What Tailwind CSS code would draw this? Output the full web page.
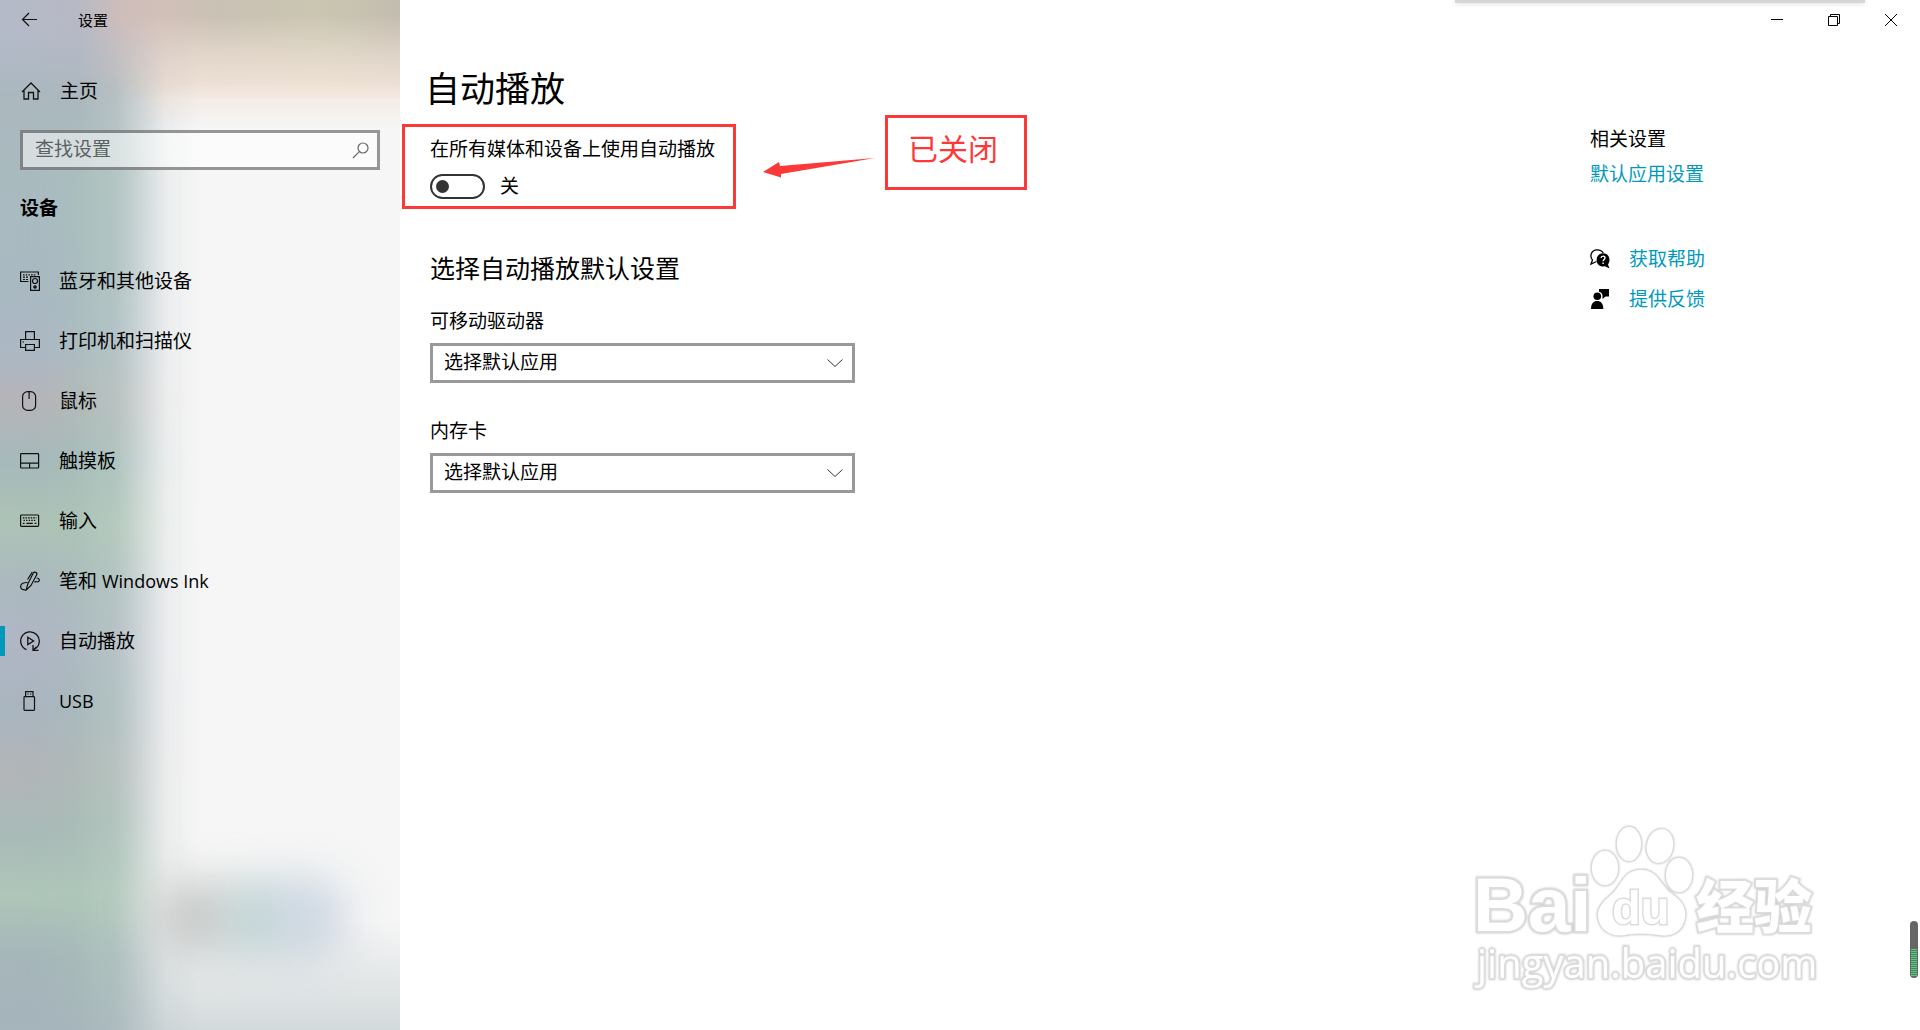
<!DOCTYPE html>
<html lang="zh-CN">
<head>
    <meta charset="UTF-8">
    <meta name="viewport" content="width=device-width, initial-scale=1.0">
    <title>设置 - 自动播放</title>
    <script src="https://cdn.jsdelivr.net/npm/@tailwindcss/browser@4"></script>
</head>
<body class="bg-white text-black text-[19px] leading-[30px] font-['Open_Sans','Noto_Sans_CJK_SC',sans-serif]">
    <div class="relative flex min-h-screen overflow-hidden">

        <!-- Sidebar -->
        <aside class="relative isolate w-[400px] shrink-0 bg-[#f6f6f6] overflow-hidden">
            <!-- Acrylic backdrop -->
            <div class="absolute inset-0 -z-10">
                <div class="absolute inset-x-0 top-0 h-[130px] bg-[#f4e6db] [mask-image:linear-gradient(180deg,#000_0%,#000_65%,transparent_98%)]"></div>
                <div class="absolute inset-y-0 left-0 w-[200px] bg-[linear-gradient(180deg,#b3b9c8_0px,#b0b9c6_40px,#abb8be_90px,#a9bbc0_200px,#a9b9c2_290px,#acb8c4_350px,#b5b5b9_400px,#a6b9bb_460px,#aec3b6_525px,#abbabf_580px,#b0b6c5_640px,#a9b5bf_710px,#b2b5b8_770px,#a9bab8_830px,#afc6b9_895px,#a5b6b9_960px,#a3b1bb_1030px)] [mask-image:linear-gradient(90deg,#000_0px,#000_80px,rgba(0,0,0,.85)_115px,rgba(0,0,0,.5)_140px,rgba(0,0,0,.15)_165px,transparent_200px)]"></div>
                <div class="absolute left-[75px] top-[130px] h-[900px] w-[50px] bg-[#aec7ba]/50 blur-xl"></div>
                <div class="absolute inset-x-0 top-0 h-[110px] bg-[linear-gradient(90deg,#b4bac8_0px,#b7b9c4_80px,#cdbdb9_120px,#d2c0b9_160px,#c9c1b4_220px,#cbc6b2_320px,#c3bdaf_400px)] [mask-image:linear-gradient(180deg,#000_0%,#000_15%,rgba(0,0,0,.45)_50%,transparent_90%)]"></div>
                <div class="absolute left-[150px] top-[885px] h-[65px] w-[95px] rounded-full bg-[#c4c6c5] blur-xl"></div>
                <div class="absolute left-[225px] top-[885px] h-[65px] w-[75px] rounded-full bg-[#b8d0d1] blur-xl"></div>
                <div class="absolute left-[275px] top-[880px] h-[75px] w-[70px] rounded-full bg-[#c9d3e1] blur-xl"></div>
                <div class="absolute inset-x-0 bottom-0 h-[110px] bg-linear-to-t from-[#a9b8bc]/45 to-transparent"></div>
            </div>

            <div class="flex h-10 items-center pl-5 text-[15px]">
                <button type="button" aria-label="返回" class="flex w-[58px] items-center">
                    <svg class="h-5 w-5" viewBox="0 0 20 20" fill="none" stroke="#111" stroke-width="1.2"><path d="M17 9.5H2.5M9 3L2.5 9.5L9 16"/></svg>
                </button>
                <span>设置</span>
            </div>

            <a href="#" class="mt-9 flex h-[30px] items-center gap-[19px] pl-[21px]">
                <svg class="h-5 w-5" viewBox="0 0 20 20" fill="none" stroke="#111" stroke-width="1.3"><path d="M1 11L10 2L19 11M3 9.5V18H7.5V11.5H12.5V18H17V9.5"/></svg>
                <span>主页</span>
            </a>

            <div class="relative mx-5 mt-6 h-10">
                <input type="text" aria-label="查找设置" placeholder="查找设置" class="h-full w-full border-3 border-black/40 bg-white/50 px-3 pb-0.5 outline-none placeholder:text-[#5c6062]">
                <svg class="absolute right-2.5 top-2.5 h-5 w-5" viewBox="0 0 20 20" fill="none" stroke="#666" stroke-width="1.2"><circle cx="13" cy="8" r="5"/><path d="M9.3 11.7L3 18"/></svg>
            </div>

            <h2 class="mt-[23px] pl-5 font-bold">设备</h2>

            <nav class="mt-7">
                <a href="#" class="flex h-15 items-center gap-[19px] pl-5">
                    <svg class="h-5 w-5" viewBox="0 0 20 20" fill="none" stroke="#111" stroke-width="1.2"><path d="M8.5 10.5H.6V1H18.4V4"/><path d="M3 3.8H16" stroke-dasharray="1.5 1.2"/><path d="M3 6.2H8.5M3 8.5H8.5" stroke-dasharray="2 1"/><path d="M10.6 5.6H19.4V19.4H10.6Z"/><circle cx="15" cy="10" r="2.5"/><circle cx="15" cy="16" r="1.2" fill="#111"/></svg>
                    <span>蓝牙和其他设备</span>
                </a>
                <a href="#" class="flex h-15 items-center gap-[19px] pl-5">
                    <svg class="h-5 w-5" viewBox="0 0 20 20" fill="none" stroke="#111" stroke-width="1.2"><path d="M5.6 8.5V.6H14.4V8.5M5.5 16.5H.6V8.5H19.4V16.5H14.5M5.6 13.5H14.4V19.4H5.6Z"/><path d="M2.5 11H4"/></svg>
                    <span>打印机和扫描仪</span>
                </a>
                <a href="#" class="flex h-15 items-center gap-[19px] pl-5">
                    <svg class="h-5 w-5" viewBox="0 0 20 20" fill="none" stroke="#111" stroke-width="1.2"><rect x="2.6" y=".6" width="13" height="18.8" rx="5"/><path d="M9.1 1V8"/></svg>
                    <span>鼠标</span>
                </a>
                <a href="#" class="flex h-15 items-center gap-[19px] pl-5">
                    <svg class="h-5 w-5" viewBox="0 0 20 20" fill="none" stroke="#111" stroke-width="1.2"><rect x=".6" y="2.6" width="18" height="14.4" rx=".8"/><path d="M.6 12.2H18.6M9.6 12.2V17"/></svg>
                    <span>触摸板</span>
                </a>
                <a href="#" class="flex h-15 items-center gap-[19px] pl-5">
                    <svg class="h-5 w-5" viewBox="0 0 20 20" fill="none" stroke="#111" stroke-width="1.2"><rect x=".6" y="4" width="18" height="11.4" rx=".8"/><path d="M2.8 6.8H16.5" stroke-dasharray="1.6 1"/><path d="M3.5 9.4H16" stroke-dasharray="1.4 1.2"/><path d="M2.8 12.4H4.6M6.4 12.4H12.8M14.6 12.4H16.4"/></svg>
                    <span>输入</span>
                </a>
                <a href="#" class="flex h-15 items-center gap-[19px] pl-5">
                    <svg class="h-5 w-5" viewBox="0 0 20 20" fill="none" stroke="#111" stroke-width="1.2"><path d="M6 19.3L8 12.5L13.2 2.2C14.2.2 17.6 1.4 16.8 3.6L11 14.5L6 19.3Z"/><path d="M12.3 1.2L7.5 8.5"/><path d="M7.5 11.5C3 11.4.6 13 .6 15.5C.6 18.2 3 19.2 5.5 18.8M16.5 7C19.5 7.2 20 9.5 18.5 10.5C17.2 11.4 15.8 10 14.4 11.2"/></svg>
                    <span>笔和 <span class="text-lg">Windows Ink</span></span>
                </a>
                <a href="#" aria-current="page" class="relative flex h-15 items-center gap-[19px] pl-5 before:absolute before:left-0 before:h-[30px] before:w-[5px] before:bg-[#0099bc]">
                    <svg class="h-5 w-5" viewBox="0 0 20 20" fill="none" stroke="#111" stroke-width="1.3"><path d="M6.5 18.7A9.3 9.3 0 1 1 15.2 17.8"/><path d="M13 14V19.3H18.5M13 19.3L16.5 16"/><path d="M7.8 6.3L13.6 10L7.8 13.6Z"/></svg>
                    <span>自动播放</span>
                </a>
                <a href="#" class="flex h-15 items-center gap-[19px] pl-5">
                    <svg class="h-5 w-5" viewBox="0 0 20 20" fill="none" stroke="#111" stroke-width="1.2"><path d="M5.6 5.5V.6H13V5.5"/><rect x="4" y="5.6" width="10.5" height="13.8" rx=".8"/><path d="M7.3 3H8.6M10 3H11.3"/></svg>
                    <span class="text-lg">USB</span>
                </a>
            </nav>
        </aside>

        <!-- Content -->
        <div class="min-w-0 flex-1">
            <div class="flex h-10 items-center justify-end pr-px">
                <button type="button" aria-label="最小化" class="flex h-10 w-[57px] items-center justify-center">
                    <svg class="h-3 w-3" viewBox="0 0 12 12" stroke="#000"><path d="M0 5.5H12"/></svg>
                </button>
                <button type="button" aria-label="向下还原" class="flex h-10 w-[57px] items-center justify-center">
                    <svg class="h-3 w-3" viewBox="0 0 12 12" fill="none" stroke="#000"><path d="M.5 2.5H9.5V11.5H.5ZM2.5 2.5V.5H11.5V9.5H9.5"/></svg>
                </button>
                <button type="button" aria-label="关闭" class="flex h-10 w-[57px] items-center justify-center">
                    <svg class="h-3 w-3" viewBox="0 0 12 12" stroke="#000"><path d="M0 0L12 12M12 0L0 12"/></svg>
                </button>
            </div>

            <div class="flex justify-between">
                <main class="pt-6">
                    <h1 class="pl-[25px] text-[35px] leading-[50px]">自动播放</h1>

                    <div class="mt-2.5 ml-0.5 flex items-start">
                        <section class="h-[85px] w-[334px] border-3 border-[#fd3838] pl-[25px] pt-[7px]">
                            <label for="autoplay" class="block">在所有媒体和设备上使用自动播放</label>
                            <div class="mt-[7px] flex items-center gap-[15px]">
                                <input type="checkbox" id="autoplay" role="switch" class="relative h-[25px] w-[55px] appearance-none rounded-full border-2 border-[#333] before:absolute before:left-1 before:top-1 before:h-[13px] before:w-[13px] before:rounded-full before:bg-[#333]">
                                <span>关</span>
                            </div>
                        </section>
                        <svg class="mt-8 ml-[27px] h-6 w-[112px]" viewBox="0 0 112 24" fill="#fd3838"><path d="M0 16L16 6L17 10L112 2L18 18L18 21.500Z"/></svg>
                        <div class="-mt-[9px] ml-[10px] h-[75px] w-[142px] border-3 border-[#fd3838] pt-2 pr-1.5 text-center text-[30px] leading-[46px] text-[#fd3838]">已关闭</div>
                    </div>

                    <section class="ml-[30px] w-[425px]">
                        <h2 class="mt-[39px] text-[25px] leading-10">选择自动播放默认设置</h2>

                        <label for="removable" class="mt-[18px] block">可移动驱动器</label>
                        <div class="relative mt-[7px]">
                            <select id="removable" class="block h-10 w-full appearance-none border-3 border-[#999] bg-white px-[11px] pb-0.5 outline-none">
                                <option>选择默认应用</option>
                            </select>
                            <svg class="pointer-events-none absolute right-3 top-4 h-2 w-4" viewBox="0 0 16 8" fill="none" stroke="#333"><path d="M.5 .5L8 7.500L15.500 .5"/></svg>
                        </div>

                        <label for="memory-card" class="mt-[33px] block">内存卡</label>
                        <div class="relative mt-[7px]">
                            <select id="memory-card" class="block h-10 w-full appearance-none border-3 border-[#999] bg-white px-[11px] pb-0.5 outline-none">
                                <option>选择默认应用</option>
                            </select>
                            <svg class="pointer-events-none absolute right-3 top-4 h-2 w-4" viewBox="0 0 16 8" fill="none" stroke="#333"><path d="M.5 .5L8 7.500L15.500 .5"/></svg>
                        </div>
                    </section>
                </main>

                <aside class="w-[330px] pt-[84px]">
                    <h3>相关设置</h3>
                    <a href="#" class="mt-[5px] block text-[#0099bc]">默认应用设置</a>
                    <a href="#" class="mt-[55px] flex items-center gap-[19px] text-[#0099bc]">
                        <svg class="h-5 w-5" viewBox="0 0 20 20" fill="none"><path d="M6.500 12.500L1 15L2.500 11C-.5 7.500 .8 1 7 .8C10.500 .7 12.500 2.500 13.300 4" stroke="#000" stroke-width="1.3"/><path d="M13 4.300C17 4.300 19.500 7.200 19.500 10.800C19.500 12.800 18.800 14.300 18 15.400L19.500 19.500L15 17.300C10 18.200 6.600 15 6.600 10.900C6.600 7.200 9.300 4.300 13 4.300Z" fill="#000"/><path d="M11 9C11.200 6.400 15.200 6.600 15 9C14.900 10.400 13.100 10.600 13.100 12.300M13.100 13.600V15" stroke="#fff" stroke-width="1.400"/></svg>
                        <span>获取帮助</span>
                    </a>
                    <a href="#" class="mt-2.5 flex items-center gap-[19px] text-[#0099bc]">
                        <svg class="h-5 w-5" viewBox="0 0 20 20" fill="#000"><path d="M9 0H19V7.500H15.500L12.500 10V7C12.500 4.500 11 3.300 9 2.800Z"/><circle cx="7.300" cy="7.300" r="3.800"/><path d="M1 20C1 14.500 3.500 12 7.200 12S13.300 14.500 13.300 20Z"/></svg>
                        <span>提供反馈</span>
                    </a>
                </aside>
            </div>
        </div>

        <!-- Edge of the window behind -->
        <div class="absolute right-[55px] top-0 h-[3px] w-[410px] bg-[#d6d6d6] shadow-[0_0_5px_#ccc]"></div>

        <!-- Watermark -->
        <svg class="absolute bottom-8 right-[90px] h-[185px] w-[360px] drop-shadow-[0_0_1px_#bbb]" viewBox="0 0 360 185" fill="#fff" stroke="#dcdcdc" stroke-width="2" paint-order="stroke">
            <g font-family="Liberation Sans, sans-serif" font-weight="700">
                <text x="3" y="118" font-size="76" stroke-width="4">Bai</text>
                <ellipse cx="135" cy="55" rx="13" ry="17"/>
                <ellipse cx="159" cy="31" rx="12" ry="17"/>
                <ellipse cx="190" cy="33" rx="13" ry="17" transform="rotate(12 190 33)"/>
                <ellipse cx="209" cy="62" rx="13" ry="17"/>
                <path d="M171 57C188 57 190 72 202 81C212 88 216 95 215 104C213 118 203 124 189 122C176 120 165 120 154 122C139 124 128 115 128 101C129 90 139 85 145 78C152 70 155 57 171 57Z"/>
                <text x="142" y="111" font-size="47" stroke-width="3">du</text>
                <text x="226" y="115" font-size="58" font-weight="900" font-family="Noto Sans CJK SC, sans-serif" stroke-width="3">经验</text>
            </g>
            <text x="7" y="165" font-size="40" font-family="Open Sans, sans-serif" font-weight="500" stroke-width="3">jingyan.baidu.com</text>
        </svg>

        <!-- Level meter -->
        <div class="absolute bottom-[52px] right-0.5 h-[57px] w-2 overflow-hidden rounded-full bg-[#666]">
            <div class="mx-px mt-7 h-[27px] bg-[repeating-linear-gradient(180deg,#4fd080_0px,#4fd080_1px,#5a7a64_1px,#5a7a64_2px)]"></div>
        </div>
    </div>
</body>
</html>
